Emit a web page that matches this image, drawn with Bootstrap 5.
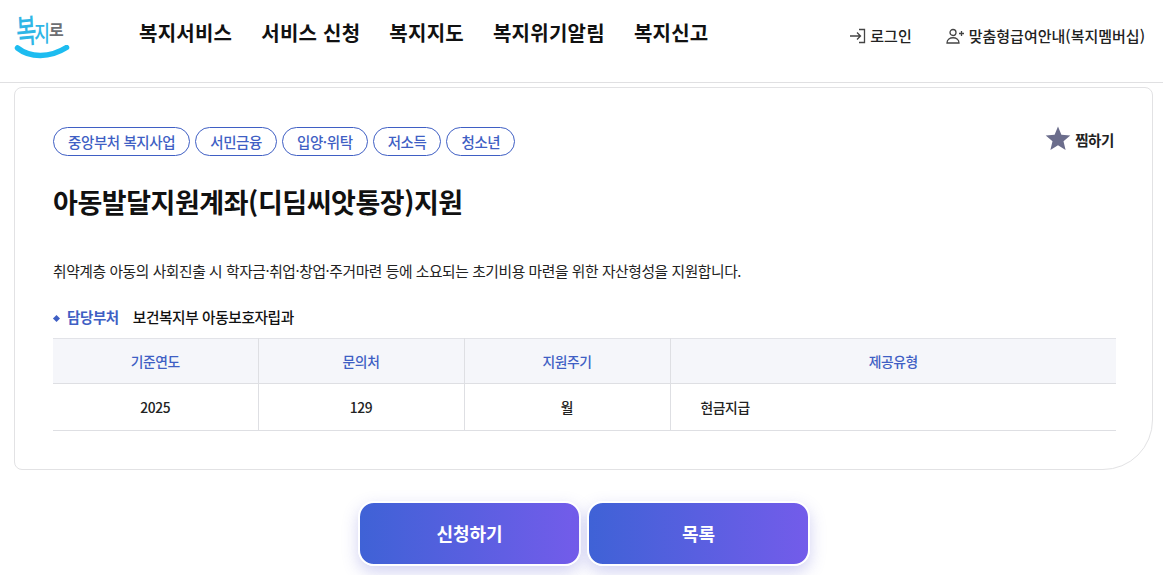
<!DOCTYPE html>
<html lang="ko">
<head>
    <meta charset="utf-8">
    <title>복지로</title>
    <link href="https://cdn.jsdelivr.net/npm/bootstrap@5.3.0/dist/css/bootstrap.min.css" rel="stylesheet">
    <style>
        html, body { height: 575px; overflow: hidden; }
        body { font-family: "Noto Sans CJK KR", "Noto Sans", sans-serif; color: #111; background: #fff; letter-spacing: -0.4px; }
        .site-header { height: 83px; border-bottom: 1px solid #e0e0e2; padding: 0 18px 0 14px; }
        .logo-box { width: 56px; height: 60px; margin-top: -8px; position: relative; }
        .logo-text { height: 36px; padding-left: 2px; letter-spacing: 0; color: #2fb6e6; font-weight: 500; line-height: 1; white-space: nowrap; }
        .logo-text span { display: inline-block; }
        .logo-bok { font-size: 22px; transform: scaleY(1.5) rotate(-4deg); margin-bottom: 4px; }
        .logo-ji { font-size: 17px; transform: scaleY(1.25); margin: 0 0 3px -2px; }
        .logo-ro { font-size: 16px; color: #6d6f73; margin: 0 0 6px -1px; font-weight: 700; }
        .logo-box svg { position: absolute; left: 0; top: 38px; }
        .main-nav { gap: 29px; margin-left: 69px; margin-top: -17px; }
        .main-nav a { font-size: 20px; font-weight: 700; color: #111; text-decoration: none; letter-spacing: .25px; }
        .util-nav { gap: 34px; font-size: 15px; font-weight: 500; color: #222; letter-spacing: 0; margin-bottom: 10px; }
        .util-nav a { color: #222; text-decoration: none; gap: 4px; }
        .detail-box { margin: 4px 10px 0 14px; height: 383px; border: 1px solid #e2e2e4; border-radius: 8px 8px 50px 8px; padding: 39px 36px 0 38px; }
        .tag-list { gap: 5px; }
        .tag-pill { height: 29px; padding: 0 14px; border: 1px solid #3f5fc4; border-radius: 15px; color: #3f5fc4; font-size: 14.500px; font-weight: 500; display: inline-flex; align-items: center; background: #fff; }
        .fav-btn { font-size: 14.500px; font-weight: 700; color: #222; gap: 4px; margin-right: 2px; margin-top: -3px; }
        .fav-btn svg { margin-top: -3px; }
        .page-title { font-size: 27px; font-weight: 700; letter-spacing: -0.45px; line-height: 40px; margin: 26px 0 0; color: #111; }
        .page-desc { font-size: 14.750px; line-height: 22px; margin: 38px 0 0; color: #222; }
        .dept-line { font-size: 14.700px; font-weight: 500; margin-top: 24px; line-height: 22px; }
        .dept-label { color: #3f5fc4; margin-right: 14px; font-weight: 700; font-size: 14.500px; }
        .dept-dot { width: 5px; height: 5px; background: #3f5fc4; transform: rotate(45deg); display: inline-block; margin: 0 8px 2px 1px; }
        .info-table { margin: 10px 0 0; font-size: 13.800px; table-layout: fixed; border-top: 1px solid #e2e3e8; }
        .info-table th, .info-table td { border-bottom: 1px solid #dedfe3; border-right: 1px solid #dedfe3; text-align: center; vertical-align: middle; padding: 0; }
        .info-table th:last-child, .info-table td:last-child { border-right: 0; }
        .info-table th { height: 45px; background: #f5f6fa; color: #3f5fc4; font-weight: 500; }
        .info-table td { height: 47px; color: #222; font-weight: 500; }
        .info-table td.cell-left { text-align: left; padding-left: 30px; }
        .action-row { gap: 6px; margin: 31px 0 0 5px; }
        .action-btn { width: 223px; height: 65px; border: 2px solid #fff; border-radius: 16px; color: #fff; font-size: 18px; font-weight: 700; background: linear-gradient(90deg, #3f62d6, #735cea); box-shadow: 0 6px 16px rgba(90, 90, 210, .28); }
        .action-btn:hover { color: #fff; }
    </style>
</head>
<body>
<!-- header -->
<header class="site-header d-flex align-items-center">
    <div class="logo-box flex-shrink-0">
        <div class="logo-text d-flex align-items-end"><span class="logo-bok">복</span><span class="logo-ji">지</span><span class="logo-ro">로</span></div>
        <svg width="56" height="18" viewBox="0 0 56 18"><path d="M3.500 3C16 13 36 13 52.500 2.500" fill="none" stroke="#1dbcf0" stroke-width="5.500" stroke-linecap="round"/></svg>
    </div>
    <nav class="main-nav d-flex">
        <a href="#">복지서비스</a>
        <a href="#">서비스 신청</a>
        <a href="#">복지지도</a>
        <a href="#">복지위기알림</a>
        <a href="#">복지신고</a>
    </nav>
    <div class="util-nav d-flex ms-auto">
        <a href="#" class="d-flex align-items-center">
            <svg width="17" height="16" viewBox="0 0 17 16" fill="none" stroke="#444" stroke-width="1.300"><path d="M1 8h10M8 4.500 11.500 8 8 11.500M10 1.500h5.500v13H10"/></svg>
            로그인
        </a>
        <a href="#" class="d-flex align-items-center">
            <svg width="19" height="16" viewBox="0 0 19 16" fill="none" stroke="#444" stroke-width="1.300"><circle cx="7" cy="4.500" r="3"/><path d="M1 15c0-7 12-7 12 0zM15.500 3v5M13 5.500h5"/></svg>
            맞춤형급여안내(복지멤버십)
        </a>
    </div>
</header>

<main>
    <section class="detail-box">
        <div class="d-flex justify-content-between align-items-center">
            <div class="tag-list d-flex">
                <span class="tag-pill">중앙부처 복지사업</span>
                <span class="tag-pill">서민금융</span>
                <span class="tag-pill">입양·위탁</span>
                <span class="tag-pill">저소득</span>
                <span class="tag-pill">청소년</span>
            </div>
            <div class="fav-btn d-flex align-items-center">
                <svg width="26" height="25" viewBox="0 0 26 25"><path d="M13 .5l3.400 8.300 8.900.7-6.800 5.800 2.100 8.700L13 19.300l-7.600 4.700 2.100-8.700L.7 9.500l8.900-.7z" fill="#6b6d8c"/></svg>
                찜하기
            </div>
        </div>
        <h1 class="page-title">아동발달지원계좌(디딤씨앗통장)지원</h1>
        <p class="page-desc">취약계층 아동의 사회진출 시 학자금·취업·창업·주거마련 등에 소요되는 초기비용 마련을 위한 자산형성을 지원합니다.</p>
        <div class="dept-line">
            <span class="dept-dot"></span><span class="dept-label">담당부처</span>보건복지부 아동보호자립과
        </div>
        <table class="info-table w-100">
            <colgroup>
                <col style="width:205px"><col style="width:206px"><col style="width:206px"><col>
            </colgroup>
            <thead>
                <tr><th>기준연도</th><th>문의처</th><th>지원주기</th><th>제공유형</th></tr>
            </thead>
            <tbody>
                <tr><td>2025</td><td>129</td><td>월</td><td class="cell-left">현금지급</td></tr>
            </tbody>
        </table>
    </section>
    <div class="action-row d-flex justify-content-center">
        <button type="button" class="btn action-btn">신청하기</button>
        <button type="button" class="btn action-btn">목록</button>
    </div>
</main>
</body>
</html>
